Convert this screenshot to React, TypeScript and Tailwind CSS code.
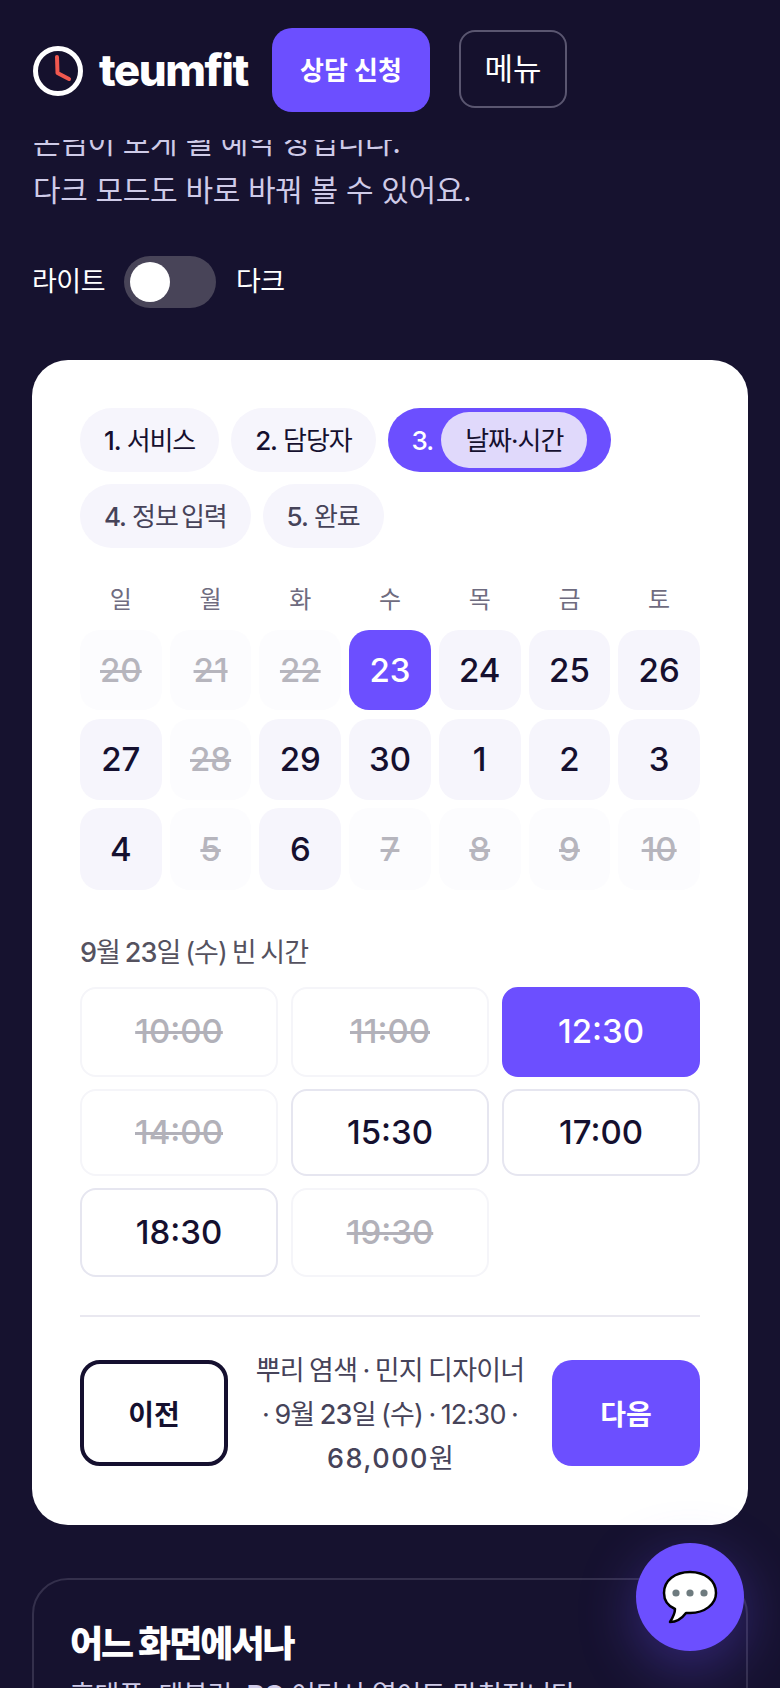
const days: [string, number][] = [
  ["20", 0], ["21", 0], ["22", 0], ["23", 2], ["24", 1], ["25", 1], ["26", 1],
  ["27", 1], ["28", 0], ["29", 1], ["30", 1], ["1", 1], ["2", 1], ["3", 1],
  ["4", 1], ["5", 0], ["6", 1], ["7", 0], ["8", 0], ["9", 0], ["10", 0],
];

const times: [string, number][] = [
  ["10:00", 0], ["11:00", 0], ["12:30", 2],
  ["14:00", 0], ["15:30", 1], ["17:00", 1],
  ["18:30", 1], ["19:30", 0],
];

const weekdays = ["일", "월", "화", "수", "목", "금", "토"];

function Chip({ children, ink = "text-[#15102f]" }: { children: React.ReactNode; ink?: string }) {
  return (
    <div className={`flex h-[64px] items-center rounded-full bg-[#f6f5fc] px-6 text-[26px] tracking-[-1.1px] ${ink}`}>
      {children}
    </div>
  );
}

function Num({ children }: { children: React.ReactNode }) {
  return <span className="font-medium">{children}</span>;
}

function dayClass(state: number) {
  if (state === 2) return "flex items-center justify-center rounded-[20px] bg-[#6c4fff] pt-[1px] text-[33px] font-medium text-white";
  if (state === 1) return "flex items-center justify-center rounded-[20px] bg-[#f6f5fc] pt-[1px] text-[33px] font-medium text-[#15102f]";
  return "flex items-center justify-center rounded-[20px] bg-[#fcfcfe] pt-[1px] text-[33px] font-medium text-[#b6b5bd] line-through";
}

function timeClass(state: number) {
  if (state === 2) return "flex items-center justify-center rounded-[16px] border-2 border-[#6c4fff] bg-[#6c4fff] text-[33px] font-medium text-white";
  if (state === 1) return "flex items-center justify-center rounded-[16px] border-2 border-[#e6e6f0] bg-white text-[33px] font-medium text-[#15102f]";
  return "flex items-center justify-center rounded-[16px] border-2 border-[#f5f5f9] bg-white text-[33px] font-medium text-[#b2b1b9] line-through";
}

export default function App() {
  return (
    <div className="relative h-[1688px] w-[780px] overflow-hidden bg-[#16122f] font-['Inter','Noto_Sans_CJK_KR',sans-serif] text-white">
      <header className="relative z-10 flex h-[140px] items-center bg-[#15112d] pl-[33px]">
        <svg width="50" height="50" viewBox="0 0 50 50" fill="none" className="mb-[-2px]">
          <circle cx="25" cy="25" r="22.5" stroke="#fff" strokeWidth="5" />
          <path d="M24 11 L24.5 27 L36 33" stroke="#f0584f" strokeWidth="4" strokeLinecap="round" strokeLinejoin="round" />
        </svg>
        <span className="ml-[16px] w-[173px] text-[44px] font-extrabold tracking-[-1.5px]">teumfit</span>
        <button className="h-[84px] w-[158px] rounded-[20px] bg-[#6c4fff] text-[26px] font-bold text-white">상담 신청</button>
        <button className="mb-[2px] ml-[29px] h-[78px] w-[108px] rounded-[16px] border-2 border-[#5a5670] text-[31px] text-white">메뉴</button>
      </header>

      <main className="mt-[-22px] px-[32px]">
        <p className="pl-px text-[30px] leading-[48px] tracking-[-0.35px] text-[#cfcbe8]">
          손님이 보게 될 예약 창입니다.
          <br />
          다크 모드도 바로 바꿔 볼 수 있어요.
        </p>

        <div className="mt-[42px] flex h-[52px] items-center text-[27px] tracking-[-0.5px] text-white">
          <span className="w-[92px]">라이트</span>
          <div className="flex h-[52px] w-[92px] items-center rounded-full bg-[#484458] pl-[6px]">
            <div className="h-[40px] w-[40px] rounded-full bg-white" />
          </div>
          <span className="ml-[20px]">다크</span>
        </div>

        <section className="mt-[52px] h-[1165px] rounded-[36px] bg-white px-[48px] pt-[48px] text-[#15102f]">
          <div className="flex flex-wrap gap-x-[12px] gap-y-[12px]">
            <Chip><Num>1.</Num>&nbsp;서비스</Chip>
            <Chip><Num>2.</Num>&nbsp;담당자</Chip>
            <div className="flex h-[64px] items-center rounded-full bg-[#6c4fff] pl-6 pr-6 text-[26px] tracking-[-1px] text-white">
              <Num>3.</Num>
              <span className="ml-[8px] flex h-[56px] items-center rounded-full bg-[#e0d9fb] px-6 text-[#15102f]">날짜·시간</span>
            </div>
            <Chip ink="text-[#464359]"><Num>4.</Num>&nbsp;<span className="[word-spacing:-3px]">정보 입력</span></Chip>
            <Chip ink="text-[#464359]"><Num>5.</Num>&nbsp;완료</Chip>
          </div>

          <div className="mt-[28px] grid h-[48px] grid-cols-7 items-center gap-x-2 text-center text-[24px] text-[#6f6c80]">
            {weekdays.map((d) => (
              <span key={d}>{d}</span>
            ))}
          </div>

          <div className="mt-[6px] grid grid-cols-7 grid-rows-[80px_81px_82px] gap-x-2 gap-y-[8.5px]">
            {days.map(([d, s]) => (
              <div key={d} className={dayClass(s)}>{d}</div>
            ))}
          </div>

          <div className="mt-[43px] text-[27px] leading-[40px] tracking-[-0.9px] text-[#55525f] [word-spacing:-2px]">
            <Num>9</Num>월 <Num>23</Num>일 (수) 빈 시간
          </div>

          <div className="mt-[14px] grid grid-cols-3 grid-rows-[90px_87px_89px] gap-x-[13px] gap-y-[12px]">
            {times.map(([t, s]) => (
              <div key={t} className={timeClass(s)}>{t}</div>
            ))}
          </div>

          <div className="mt-[38px] h-[2px] bg-[#e9e8f0]" />

          <div className="mt-[43px] flex h-[106px] items-center justify-between">
            <button className="h-[106px] w-[148px] rounded-[20px] border-[4px] border-[#15102f] pt-[3px] text-[28px] font-bold text-[#15102f]">이전</button>
            <p className="w-[272px] pt-[4px] text-center text-[27px] leading-[44px] tracking-[-0.8px] text-[#464359] [word-spacing:-1.5px]">
              뿌리 염색 · 민지 디자이너 · 9월 <Num>23</Num>일 (수) · 12:30 · <span className="font-medium tracking-[1.5px]">68,000</span>원
            </p>
            <button className="h-[106px] w-[148px] rounded-[20px] bg-[#6c4fff] pt-[3px] text-[28px] font-bold text-white">다음</button>
          </div>
        </section>

        <section className="mt-[53px] h-[300px] rounded-[36px] border-2 border-[#34304c] px-[36px] pt-[38px]">
          <h2 className="text-[36px] font-extrabold leading-[52px] tracking-[-2px] text-white">어느 화면에서나</h2>
          <p className="mt-[6px] text-[27px] leading-[40px] tracking-[-0.3px] text-[#cfcbe8]">휴대폰, 태블릿, <b>PC</b> 어디서 열어도 맞춰집니다.</p>
        </section>
      </main>

      <button className="absolute left-[636px] top-[1543px] z-20 flex h-[108px] w-[108px] items-center justify-center rounded-full bg-[#6c4fff] shadow-[0_16px_56px_rgba(108,79,255,0.35)]">
        <svg width="56" height="55" viewBox="0 0 56 55" fill="none">
          <path
            d="M28 2 C13 2 2 10.5 2 23 C2 30 6 36 13 39 C13 44 10.5 48 8 52 C15 52 21 47 24 43 C25.5 43.2 26.5 43 28 43 C43 43 54 34 54 23 C54 10.5 43 2 28 2Z"
            fill="#fff"
            stroke="#000"
            strokeWidth="2.5"
            strokeLinejoin="round"
          />
          <circle cx="14" cy="23" r="3.6" fill="#6e7b7f" />
          <circle cx="28" cy="23" r="3.6" fill="#6e7b7f" />
          <circle cx="42" cy="23" r="3.6" fill="#6e7b7f" />
        </svg>
      </button>
    </div>
  );
}
